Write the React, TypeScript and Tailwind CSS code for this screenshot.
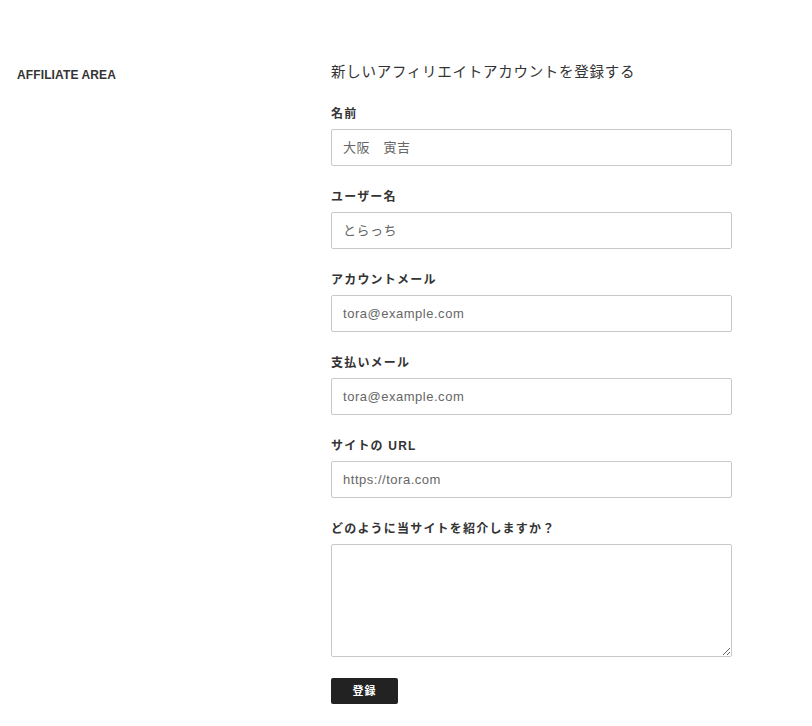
import React from 'react';

interface Field {
  label: string;
  placeholder: string;
}

const fields: Field[] = [
  { label: '名前', placeholder: '大阪　寅吉' },
  { label: 'ユーザー名', placeholder: 'とらっち' },
  { label: 'アカウントメール', placeholder: 'tora@example.com' },
  { label: '支払いメール', placeholder: 'tora@example.com' },
  { label: 'サイトの URL', placeholder: 'https://tora.com' },
];

const font = { fontFamily: '"Liberation Sans", "Noto Sans CJK JP", sans-serif' };

const App: React.FC = () => {
  return (
    <div className="min-h-[726px] w-full bg-white text-[#333]" style={font}>
      <div className="flex pt-[62px] pl-[17px]">
        <aside className="w-[314px] shrink-0 pt-[2px]">
          <h2 className="text-[12px] font-bold leading-[22px] tracking-[0.01em] text-[#333]">AFFILIATE AREA</h2>
        </aside>

        <main className="w-[401px] flex flex-col">
          <h1 className="text-[14.5px] leading-[20px] tracking-[0.05em] text-[#333]">
            新しいアフィリエイトアカウントを登録する
          </h1>

          <form className="flex flex-col pt-[23px]" onSubmit={e => e.preventDefault()}>
            {fields.map(f => (
              <div key={f.label} className="flex flex-col mb-[22px]">
                <label className="text-[12px] font-bold leading-[18px] tracking-[0.1em] mb-[6px] text-[#333]">
                  {f.label}
                </label>
                <input
                  type="text"
                  placeholder={f.placeholder}
                  className="h-[37px] w-full rounded-[2px] border border-[#c9c9c9] px-[11px] text-[13px] tracking-[0.04em] text-[#555] placeholder:text-[#666] outline-none"
                />
              </div>
            ))}

            <div className="flex flex-col">
              <label className="text-[12px] font-bold leading-[18px] tracking-[0.1em] mb-[6px] text-[#333]">
                どのように当サイトを紹介しますか？
              </label>
              <textarea className="h-[113px] w-full rounded-[2px] border border-[#c9c9c9] px-[11px] py-2 text-[13px] outline-none" />
            </div>

            <div className="pt-[21px]">
              <button
                type="submit"
                className="h-[26px] w-[67px] rounded-[2px] bg-[#222] text-[11px] font-bold tracking-[0.1em] text-white"
              >
                登録
              </button>
            </div>
          </form>
        </main>
      </div>
    </div>
  );
};

export default App;
